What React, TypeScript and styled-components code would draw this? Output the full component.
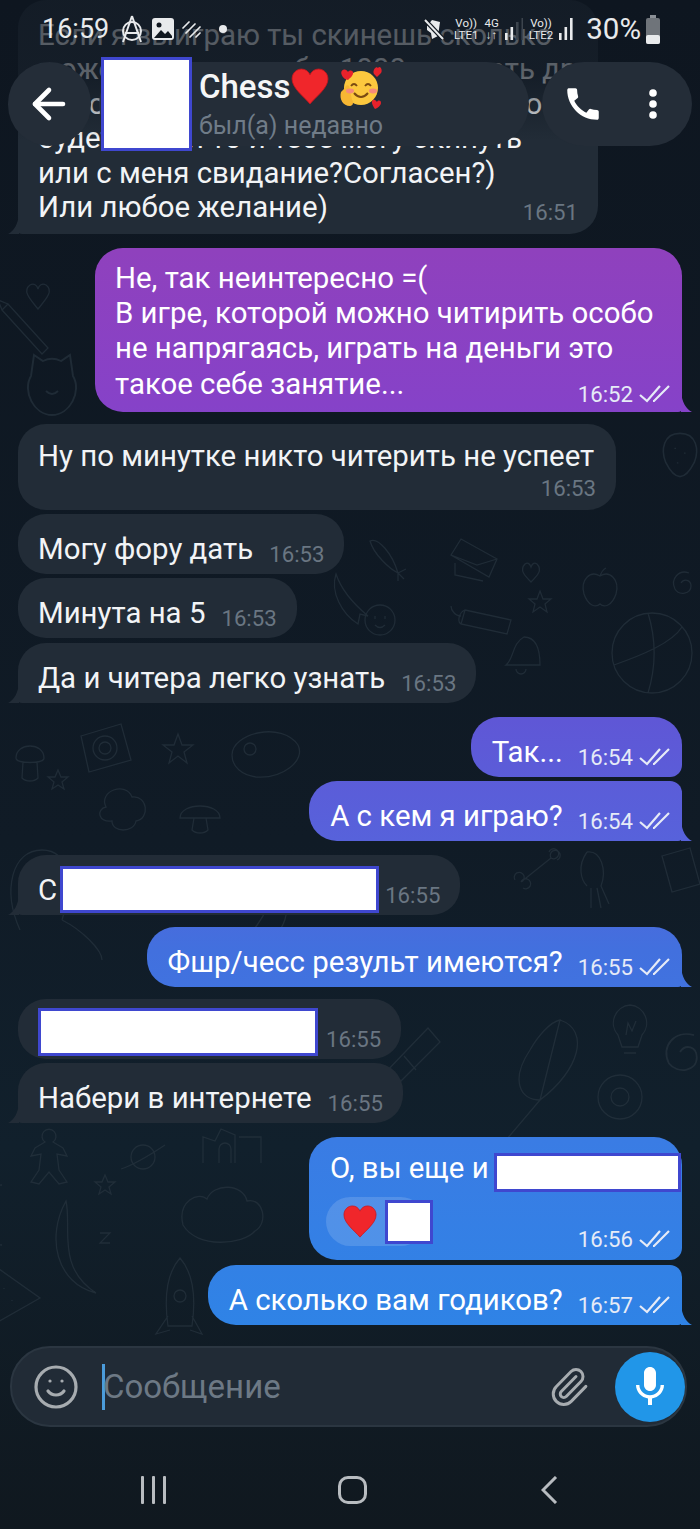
import React from 'react';
import styled, { createGlobalStyle, css } from 'styled-components';
import { ArrowLeft, Paperclip, Smile } from 'lucide-react';
import { MdCall, MdMic } from 'react-icons/md';

const GlobalStyle = createGlobalStyle`
  html, body { margin: 0; padding: 0; background: #10171f; }
  * { box-sizing: border-box; }
`;

const OUT_GRADIENT = `linear-gradient(180deg, #8f41bd 0, #8f41bd 250px, #8642c8 405px, #5f57d6 720px, #5762db 840px, #4270de 950px, #3a7ce4 1140px, #2f83e6 1325px)`;

const Screen = styled.div`
  position: relative;
  width: 700px;
  height: 1529px;
  overflow: hidden;
  display: flex;
  flex-direction: column;
  font-family: Roboto, 'Noto Sans', sans-serif;
  color: #f2f4f6;
  background: linear-gradient(180deg, #0e1620 0%, #101b26 55%, #11202c 75%, #10181f 100%);
`;

const Wallpaper = styled.svg`
  position: absolute;
  inset: 0;
  width: 700px;
  height: 1529px;
  fill: none;
  stroke: #2a3742;
  stroke-width: 1.3;
  opacity: 0.62;
`;

// darkens the messages that scroll under the status bar
const TopShade = styled.div`
  position: absolute;
  top: 0;
  left: 0;
  right: 0;
  height: 150px;
  z-index: 1;
  background: linear-gradient(180deg, rgba(14, 22, 32, 0.72) 0, rgba(14, 22, 32, 0.66) 75px, rgba(14, 22, 32, 0) 140px);
`;

/* status bar */
const StatusBar = styled.div`
  position: absolute;
  top: 13px;
  left: 42px;
  right: 40px;
  height: 32px;
  display: flex;
  align-items: center;
  z-index: 3;
`;

const Clock = styled.span`
  font-size: 27px;
  color: #e8eaec;
  margin-right: 11px;
`;

const StatusGroup = styled.div<{ $gap: number }>`
  display: flex;
  align-items: center;
  gap: ${p => p.$gap}px;
`;

const Spacer = styled.div`
  flex: 1;
`;

const NetLabel = styled.span`
  display: flex;
  flex-direction: column;
  align-items: center;
  font-size: 11.5px;
  line-height: 12px;
  color: #e8eaec;
`;

const Battery = styled.span`
  font-size: 29.5px;
  color: #e8eaec;
  margin-left: 9px;
  margin-right: 5px;
`;

/* header */
const Header = styled.div`
  position: absolute;
  top: 62px;
  left: 8px;
  right: 8px;
  height: 84px;
  display: flex;
  z-index: 2;
`;

const Pill = styled.div`
  height: 84px;
  border-radius: 42px;
  background: #242d38;
  display: flex;
  align-items: center;
`;

const BackCircle = styled(Pill)`
  width: 84px;
  justify-content: center;
  margin-right: 8px;
`;

const TitlePill = styled(Pill)`
  width: 435px;
  padding-left: 2px;
`;

const ActionsPill = styled(Pill)`
  width: 152px;
  margin-left: 13px;
  padding-left: 20px;
  gap: 43px;
`;

const Redact = styled.span<{ $w: number; $h: number }>`
  display: block;
  flex: none;
  width: ${p => p.$w}px;
  height: ${p => p.$h}px;
  background: #fff;
  border: 3px solid #3f47cf;
`;

const AvatarRedact = styled(Redact)`
  margin: -5px 7px -5px 0;
`;

const TitleBlock = styled.div`
  display: flex;
  flex-direction: column;
`;

const Title = styled.div`
  display: flex;
  align-items: center;
  font-size: 33px;
  font-weight: 500;
  line-height: 40px;
  margin-top: -2px;
  color: #f5f6f7;
`;

const Subtitle = styled.div`
  font-size: 25px;
  line-height: 32px;
  color: #707c88;
`;

/* messages */
const MessageList = styled.div`
  display: flex;
  flex-direction: column;
  position: relative;
  height: 1346px;
`;

const Bubble = styled.div<{ $out?: boolean; $tail?: boolean; $top: number; $joinTop?: boolean }>`
  position: relative;
  display: flex;
  align-items: flex-end;
  flex: none;
  font-size: 29.4px;
  line-height: 34px;
  margin-top: ${p => p.$top}px;
  padding: 18px 20px 8px;
  border-radius: 28px;
  ${p => p.$out
    ? css`
        align-self: flex-end;
        margin-right: 18px;
        padding-left: 21px;
        padding-right: 12px;
        background: ${OUT_GRADIENT};
        background-attachment: fixed;
        color: #fff;
        border-bottom-right-radius: ${p.$tail ? 4 : 12}px;
        border-top-right-radius: ${p.$joinTop ? 12 : 28}px;
      `
    : css`
        align-self: flex-start;
        margin-left: 18px;
        background: #222c37;
        border-bottom-left-radius: ${p.$tail ? 4 : 28}px;
      `}
  ${p => p.$tail && css`
    &::after {
      content: '';
      position: absolute;
      bottom: 0;
      width: 11px;
      height: 20px;
      background: inherit;
      background-attachment: inherit;
      ${p.$out
        ? css`
            right: -10px;
            clip-path: path('M0 0 C1 10 5 17 11 20 L0 20 Z');
          `
        : css`
            left: -10px;
            clip-path: path('M11 0 C10 10 6 17 0 20 L11 20 Z');
          `}
    }
  `}
`;

const StackBubble = styled(Bubble)<{ $width?: number }>`
  flex-direction: column;
  align-items: flex-start;
  width: ${p => (p.$width ? `${p.$width}px` : 'auto')};
`;

const FirstBubble = styled(StackBubble)`
  padding-top: 18px;
  padding-bottom: 9.6px;
  line-height: 34.4px;
`;

const PurpleBubble = styled(StackBubble)`
  padding-top: 13px;
  padding-left: 20px;
  padding-bottom: 6.2px;
  line-height: 35.2px;
`;

const PlainBubble = styled(StackBubble)`
  padding-top: 15px;
  padding-bottom: 10px;
`;

const MixedBubble = styled(StackBubble)`
  padding: 14px 2px 14px 21px;
`;

const Line = styled.div`
  white-space: nowrap;
`;

const Meta = styled.div<{ $out?: boolean; $overlap?: number; $stacked?: boolean; $gap?: number }>`
  display: flex;
  align-items: center;
  flex: none;
  gap: 6px;
  height: 24px;
  font-size: 22.2px;
  line-height: 24px;
  margin-left: ${p => p.$gap ?? (p.$out ? 15 : 16)}px;
  color: ${p => (p.$out ? '#e6ebf7' : '#6a7682')};
  ${p => p.$stacked && css`
    margin-left: auto;
    margin-top: ${p.$overlap ?? 0}px;
  `}
`;

const ReactionMeta = styled(Meta)`
  margin-bottom: -5px;
`;

const InlineRedact = styled(Redact)<{ $up: number; $down: number; $left: number }>`
  margin: ${p => -p.$up}px 0 ${p => -p.$down}px ${p => p.$left}px;
`;

const TextRow = styled.div`
  display: flex;
  align-items: flex-start;
  white-space: nowrap;
`;

const ReactionRow = styled.div`
  display: flex;
  align-items: flex-end;
  width: 100%;
  padding-right: 10px;
  margin-top: 5px;
`;

const Reaction = styled.div`
  display: flex;
  align-items: center;
  width: 99px;
  height: 49px;
  margin-left: -4px;
  padding-left: 17px;
  border-radius: 25px;
  background: rgba(255, 255, 255, 0.14);
`;

const ReactionRedact = styled(Redact)`
  margin-left: 8px;
  margin-top: 1px;
`;

/* composer */
const Composer = styled.div`
  width: 677px;
  height: 81px;
  margin: 0 0 0 10px;
  display: flex;
  align-items: center;
  padding: 0 0 0 20px;
  border-radius: 40px;
  background: #212b36;
  border: 2px solid #2b3641;
  color: #a7acb0;
`;

const Caret = styled.div`
  width: 3px;
  height: 46px;
  margin-left: 22px;
  background: #4b9cdb;
`;

const Placeholder = styled.div`
  flex: 1;
  font-size: 33px;
  color: #6d7985;
  margin-left: -2px;
`;

const ClipButton = styled.div`
  display: flex;
  margin-right: 25px;
`;

const MicButton = styled.div`
  width: 70px;
  height: 70px;
  border-radius: 50%;
  background: #2196e8;
  color: #fff;
  display: flex;
  align-items: center;
  justify-content: center;
`;

/* android nav */
const NavBar = styled.div`
  flex: 1;
  display: flex;
  align-items: flex-start;
  justify-content: space-between;
  padding: 49px 142px 0 141px;
`;

const RecentBars = styled.div`
  display: flex;
  gap: 8px;
  height: 28px;
  & > span {
    width: 3px;
    height: 100%;
    background: #b8bcc0;
    border-radius: 1px;
  }
`;

const HomeSquare = styled.div`
  width: 29px;
  height: 28px;
  border: 3px solid #b8bcc0;
  border-radius: 10px;
  margin-left: -2px;
`;

const BackChevron = styled.svg`
  width: 17px;
  height: 28px;
`;

const Checks = () => (
  <svg width="31" height="18" viewBox="0 0 31 18" fill="none" stroke="currentColor" strokeWidth="2.2">
    <path d="M1 10 L8 16 L21 1" />
    <path d="M14 16 L15 16 L30 1" />
  </svg>
);

const HeartEmoji = ({ size }: { size: number }) => (
  <svg width={size} height={size} viewBox="0 0 36 36" style={{ flex: 'none' }}>
    <path d="M18 34 C12 27 1 19 1 10.5 C1 4.5 5.5 1 10 1 C13.5 1 16.5 3 18 6.5 C19.5 3 22.5 1 26 1 C30.5 1 35 4.5 35 10.5 C35 19 24 27 18 34 Z" fill="#f0262b" stroke="#c9151c" strokeWidth="0.8" />
  </svg>
);

const FaceEmoji = () => (
  <svg width="44" height="46" viewBox="0 0 44 46" style={{ flex: 'none', marginLeft: 9 }}>
    <circle cx="23" cy="24" r="17" fill="#fcc83e" />
    <path d="M3 28 C1 35 5 42 12 42 C15 42 16 38 14 36 L11 22 C9 20 7 22 7 24 Z" fill="#f7b733" />
    <path d="M13 22 q3 -4 6 0 M27 22 q3 -4 6 0" stroke="#7a4a12" strokeWidth="1.8" fill="none" />
    <path d="M16 29 q7 8 14 0" stroke="#7a4a12" strokeWidth="2" fill="none" />
    <ellipse cx="12" cy="27" rx="4" ry="2.4" fill="#f58a7a" />
    <ellipse cx="35" cy="27" rx="4" ry="2.4" fill="#f58a7a" />
    <path d="M36 10 C34 7 38 1 40 4 C42 1 45 6 43 9 L39 13 Z" fill="#e8222b" />
    <path d="M7 15 C3 12 2 7 5 6 C7 5 9 6 10 8 C11 6 14 6 15 8 C16 11 12 14 10 16 Z" fill="#e8222b" />
    <path d="M37 45 C34 41 33 37 35 36 C37 35 38 37 39 38 C40 36 43 36 43 39 C43 41 40 44 37 45 Z" fill="#e8222b" />
  </svg>
);

// doodles behind the chat, x/y taken from the reference wallpaper
const doodles: { d: string; x: number; y: number; s?: number }[] = [
  { d: 'M0 16 C-8 6 -16 -2 -8 -8 C-4 -10 -1 -8 0 -4 C1 -8 4 -10 8 -8 C16 -2 8 6 0 16Z', x: 38, y: 293 },
  { d: 'M-12 -18 L-6 -14 C-2 -16 2 -16 6 -14 L12 -18 L14 -4 C20 6 12 22 0 22 C-12 22 -20 6 -14 -4Z M-4 6 q4 4 8 0', x: 52, y: 382, s: 1.5 },
  { d: 'M-22 -22 L18 22 L24 16 L-16 -28Z M-22 -22 L-26 -32 L-16 -28', x: 24, y: 332 },
  { d: 'M0 -18 C14 -18 16 -4 12 6 C8 14 4 18 0 18 C-4 18 -8 14 -12 6 C-16 -4 -14 -18 0 -18Z M-4 -6 v1 M4 -2 v1 M-2 6 v1', x: 680, y: 455, s: 1.2 },
  // carrot, flame, smiley, envelope, heart, apple, star, dynamite, bell, ball, swirl
  { d: 'M-14 -26 C-6 -30 8 -14 14 6 C6 2 -10 -12 -14 -26Z M14 6 l8 -4 M14 6 l6 6 M14 6 l0 8', x: 384, y: 567 },
  { d: 'M-14 -26 C-8 -8 6 6 18 16 L10 14 L8 24 C-8 14 -20 -8 -14 -26Z', x: 350, y: 600 },
  { d: 'M-15 0 a15 15 0 1 0 30 0 a15 15 0 1 0 -30 0 M-5 -4 v3 M5 -4 v3 M-5 5 q5 5 10 0', x: 380, y: 620 },
  { d: 'M-18 -8 L-8 -24 L28 -4 L20 14 Z M-18 -8 L8 2 L28 -4 M-14 0 L-14 12 L14 18', x: 469, y: 563 },
  { d: 'M0 12 C-6 6 -12 0 -6 -6 C-3 -8 -1 -6 0 -3 C1 -6 3 -8 6 -6 C12 0 6 6 0 12Z', x: 531, y: 570 },
  { d: 'M0 -14 C10 -20 20 -10 16 4 C12 16 4 18 0 14 C-4 18 -12 16 -16 4 C-20 -10 -10 -20 0 -14Z M0 -14 q2 -6 6 -8', x: 600, y: 590 },
  { d: 'M0 -11 L3 -3 L11 -3 L5 2 L7 10 L0 5 L-7 10 L-5 2 L-11 -3 L-3 -3Z', x: 540, y: 602 },
  { d: 'M-22 -10 L24 0 L20 14 L-26 4Z M-22 -10 C-28 -8 -30 2 -26 4 M-26 -4 C-32 -4 -36 -10 -36 -14', x: 487, y: 620 },
  { d: 'M-16 12 C-8 6 -10 -10 2 -16 C14 -16 18 -4 18 12Z M-6 16 a5 5 0 1 0 10 0', x: 522, y: 653 },
  { d: 'M-40 0 A40 40 0 1 1 40 0 A40 40 0 1 1 -40 0 M-38 12 C-10 2 20 -10 30 -26 M-4 -40 C4 -14 4 14 -4 40', x: 652, y: 653 },
  { d: 'M0 0 c3 -5 10 -3 10 3 c0 8 -12 10 -16 3 c-5 -10 4 -20 14 -16', x: 681, y: 583 },
  { d: 'M-22 -14 L18 -26 L28 10 L-14 22Z M2 -2 m-12 0 a12 12 0 1 0 24 0 a12 12 0 1 0 -24 0 M2 -2 m-6 0 a6 6 0 1 0 12 0 a6 6 0 1 0 -12 0', x: 103, y: 750 },
  { d: 'M0 -15 L4 -4 L15 -4 L6 3 L9 14 L0 7 L-9 14 L-6 3 L-15 -4 L-4 -4Z', x: 178, y: 749 },
  { d: 'M0 -10 L3 -3 L10 -3 L4 2 L6 9 L0 5 L-6 9 L-4 2 L-10 -3 L-3 -3Z', x: 58, y: 780 },
  { d: 'M-14 -10 C-14 -26 14 -26 14 -10 C14 -4 -14 -4 -14 -10Z M-7 -6 L-8 10 C-4 14 4 14 8 10 L7 -6', x: 30, y: 768 },
  { d: 'M-30 0 C-30 -22 20 -34 36 -10 C44 6 20 24 -6 22 C-20 20 -30 12 -30 0Z M-18 -6 a6 6 0 1 0 12 0 a6 6 0 1 0 -12 0', x: 262, y: 755 },
  { d: 'M-16 -8 C-24 -24 4 -34 10 -18 C26 -20 28 4 14 6 C12 18 -10 18 -10 6 C-24 8 -26 -6 -16 -8Z', x: 122, y: 815 },
  { d: 'M-20 0 C-20 -16 20 -16 20 0Z M-6 0 L-8 12 C-4 16 4 16 8 12 L6 0', x: 200, y: 818 },
  { d: 'M-22 50 C-40 10 -30 -30 0 -30 C30 -30 30 10 20 40 M20 40 C40 50 60 70 60 80', x: 42, y: 880 },
  { d: 'M-16 12 L14 -12 M-16 12 a5 5 0 1 0 -6 -2 M-16 12 a5 5 0 1 1 2 6 M14 -12 a5 5 0 1 1 6 2 M14 -12 a5 5 0 1 0 -2 -6', x: 537, y: 870 },
  { d: 'M-8 -28 C6 -30 12 -10 6 6 L14 24 M2 8 L6 28 M-4 8 L-4 28 M-8 -28 C-18 -14 -14 0 -8 6', x: 595, y: 880 },
  { d: 'M-14 -14 L14 -22 L24 14 L-4 22Z M-14 -14 L-4 22', x: 676, y: 870 },
  { d: 'M-34 30 C-10 20 10 -6 10 -30 C30 -30 30 -6 20 10 C10 24 -20 40 -34 30Z', x: 260, y: 920 },
  { d: 'M0 -22 a18 18 0 0 1 12 30 L8 20 H-8 L-12 8 A18 18 0 0 1 0 -22Z M-6 26 H6 M-4 8 L-2 -4 L2 4 L6 -6', x: 630, y: 1027 },
  { d: 'M40 -50 C70 -40 60 0 20 30 L-14 70 M20 30 C0 30 -10 10 10 -20 C18 -34 30 -48 40 -50Z', x: 520, y: 1070 },
  { d: 'M-22 0 a22 22 0 1 0 44 0 a22 22 0 1 0 -44 0 M-9 0 a9 9 0 1 0 18 0 a9 9 0 1 0 -18 0', x: 620, y: 1097 },
  { d: 'M0 0 c4 -6 12 -4 12 4 c0 10 -14 12 -20 4 c-6 -12 4 -24 18 -20', x: 680, y: 1052, s: 1.4 },
  { d: 'M-26 22 L18 -24 L30 -10 L-14 34Z M-6 4 L6 18', x: 410, y: 1052 },
  { d: 'M-4 -18 a7 7 0 1 1 8 0 L14 -12 L18 -4 L8 -6 L10 10 L18 22 L10 24 L0 12 L-10 24 L-18 22 L-10 10 L-8 -6 L-18 -4 L-14 -12Z', x: 49, y: 1160 },
  { d: 'M-12 0 a12 12 0 1 0 24 0 a12 12 0 1 0 -24 0 M-22 12 C-10 8 10 -4 22 -12', x: 143, y: 1157 },
  { d: 'M0 -10 L3 -3 L10 -3 L4 2 L6 9 L0 5 L-6 9 L-4 2 L-10 -3 L-3 -3Z', x: 105, y: 1185 },
  { d: 'M-40 20 C-46 -4 -24 -14 -16 -6 C-10 -22 20 -22 24 -4 C40 -8 46 18 32 26 C20 40 -26 44 -40 20Z', x: 223, y: 1205 },
  { d: 'M-22 -12 V-38 L-10 -34 L-4 -46 L10 -40 V-12 M14 -38 H36 V-12 M-6 -12 V-26 a6 6 0 1 1 12 0 V-12', x: 225, y: 1175 },
  { d: 'M-24 -30 A28 28 0 1 0 -24 30 A28 28 0 0 1 -24 -30Z', x: 26, y: 1215 },
  { d: 'M-10 -46 C-30 -10 -20 36 20 46 C-20 20 -4 -20 -10 -46Z M24 -14 L34 -14 L24 -4 L34 -4', x: 76, y: 1247 },
  { d: 'M-20 -24 L28 10 L-14 34Z M-8 0 v1 M0 12 v1', x: 12, y: 1288 },
  { d: 'M0 -42 C14 -26 16 -2 12 26 H-12 C-16 -2 -14 -26 0 -42Z M-6 -4 a6 6 0 1 0 12 0 a6 6 0 1 0 -12 0 M-12 16 L-24 34 L-10 30 M12 16 L22 34 L10 30', x: 180, y: 1300 },
];

const Stripes = () => (
  <svg width="20" height="20" viewBox="0 0 20 20" stroke="#e8eaec" strokeWidth="1.7" strokeLinecap="round">
    <path d="M1 9 L7 3 M4 14 L13 5 M8 18 L18 8 M14 18 L18 14" />
  </svg>
);

const AnarchyIcon = () => (
  <svg width="24" height="28" viewBox="0 0 24 28" fill="none" stroke="#e8eaec" strokeWidth="2">
    <circle cx="12" cy="16" r="9" />
    <path d="M12 1 L3 27 M12 1 L21 27 M5 18 H19" />
  </svg>
);

const ImageIcon = () => (
  <svg width="22" height="22" viewBox="0 0 22 22">
    <rect width="22" height="22" rx="3" fill="#e8eaec" />
    <circle cx="7" cy="7" r="2.5" fill="#10171f" />
    <path d="M2 20 L9 12 L13 16 L16 13 L20 18 V20Z" fill="#10171f" />
  </svg>
);

const MuteIcon = () => (
  <svg width="24" height="24" viewBox="0 0 24 24">
    <path d="M8 3 L16 5 L14 19 L8 22 L7 16 L3 13 L3 9 Z" fill="#e8eaec" />
    <path d="M1 3 L19 22" stroke="#10171f" strokeWidth="4.5" />
    <path d="M1 3 L19 22" stroke="#e8eaec" strokeWidth="2" />
  </svg>
);

const SignalBars = ({ levels, active }: { levels: number[]; active: number }) => (
  <svg width="18" height="22" viewBox="0 0 18 22">
    {levels.map((h, i) => (
      <rect key={i} x={i * 5.5} y={22 - h} width="2.6" height={h} fill={i < active ? '#e8eaec' : '#3c444d'} />
    ))}
  </svg>
);

const BatteryIcon = () => (
  <svg width="14" height="29" viewBox="0 0 14 29">
    <rect x="4" y="0" width="6" height="3" fill="#8b9096" />
    <rect x="0" y="3" width="14" height="26" rx="2" fill="#6f747a" />
    <rect x="0" y="20" width="14" height="9" rx="2" fill="#e8eaec" />
  </svg>
);

const MoreIcon = () => (
  <svg width="12" height="34" viewBox="0 0 12 34" fill="#fff">
    <circle cx="6" cy="6" r="3.8" />
    <circle cx="6" cy="17" r="3.8" />
    <circle cx="6" cy="28" r="3.8" />
  </svg>
);

export default function App() {
  return (
    <Screen>
      <GlobalStyle />
      <Wallpaper viewBox="0 0 700 1529">
        {doodles.map((o, i) => (
          <path key={i} d={o.d} transform={`translate(${o.x} ${o.y}) scale(${o.s ?? 1})`} />
        ))}
      </Wallpaper>

      <TopShade />

      <StatusBar>
        <Clock>16:59</Clock>
        <StatusGroup $gap={8}>
          <AnarchyIcon />
          <ImageIcon />
          <Stripes />
        </StatusGroup>
        <svg width="8" height="8" style={{ marginLeft: 17 }}>
          <circle cx="4" cy="4" r="4" fill="#e8eaec" />
        </svg>
        <Spacer />
        <StatusGroup $gap={6}>
          <MuteIcon />
          <NetLabel>Vo))<span>LTE1</span></NetLabel>
          <NetLabel>4G<span>↓↑</span></NetLabel>
          <SignalBars levels={[7, 13, 18, 22]} active={2} />
          <NetLabel>Vo))<span>LTE2</span></NetLabel>
          <SignalBars levels={[7, 13, 22]} active={3} />
        </StatusGroup>
        <Battery>30%</Battery>
        <BatteryIcon />
      </StatusBar>

      <Header>
        <BackCircle>
          <ArrowLeft size={48} color="#fff" strokeWidth={2.3} />
        </BackCircle>
        <TitlePill>
          <AvatarRedact $w={91} $h={94} />
          <TitleBlock>
            <Title>
              Chess
              <HeartEmoji size={38} />
              <FaceEmoji />
            </Title>
            <Subtitle>был(а) недавно</Subtitle>
          </TitleBlock>
        </TitlePill>
        <ActionsPill>
          <MdCall size={42} color="#fff" />
          <MoreIcon />
        </ActionsPill>
      </Header>

      <MessageList>
        <FirstBubble $top={0} $tail $width={580}>
          <Line>Если я выиграю ты скинешь сколько</Line>
          <Line>можешь, или хотя бы 1000 или дать др</Line>
          <Line>подойдёт любая сумма, а если мало</Line>
          <Line>будет ничья то и тебе могу скинуть</Line>
          <Line>или с меня свидание?Согласен?)</Line>
          <Line>Или любое желание)</Line>
          <Meta $stacked $overlap={-24}>16:51</Meta>
        </FirstBubble>

        <PurpleBubble $out $tail $top={14} $width={587}>
          <Line>Не, так неинтересно =(</Line>
          <Line>В игре, которой можно читирить особо</Line>
          <Line>не напрягаясь, играть на деньги это</Line>
          <Line>такое себе занятие...</Line>
          <Meta $out $stacked $overlap={-20}>16:52 <Checks /></Meta>
        </PurpleBubble>

        <PlainBubble $top={12} $width={598}>
          <Line>Ну по минутке никто читерить не успеет</Line>
          <Meta $stacked $overlap={3}>16:53</Meta>
        </PlainBubble>
        <Bubble $top={4}>Могу фору дать<Meta>16:53</Meta></Bubble>
        <Bubble $top={4}>Минута на 5<Meta>16:53</Meta></Bubble>
        <Bubble $top={5} $tail>Да и читера легко узнать<Meta>16:53</Meta></Bubble>

        <Bubble $out $top={14}>Так...<Meta $out>16:54 <Checks /></Meta></Bubble>
        <Bubble $out $tail $joinTop $top={4}>А с кем я играю?<Meta $out>16:54 <Checks /></Meta></Bubble>

        <Bubble $top={14} $tail>
          С
          <InlineRedact $w={319} $h={47} $up={7} $down={6} $left={3} />
          <Meta $gap={6}>16:55</Meta>
        </Bubble>

        <Bubble $out $tail $top={12}>Фшр/чесс результ имеются?<Meta $out>16:55 <Checks /></Meta></Bubble>

        <Bubble $top={12}>
          <InlineRedact $w={280} $h={48} $up={9} $down={5} $left={0} />
          <Meta $gap={8}>16:55</Meta>
        </Bubble>
        <Bubble $top={4} $tail>Набери в интернете<Meta>16:55</Meta></Bubble>

        <MixedBubble $out $top={14} $width={373}>
          <TextRow>
            О, вы еще и
            <InlineRedact $w={187} $h={39} $up={-2} $down={0} $left={5} />
          </TextRow>
          <ReactionRow>
            <Reaction>
              <HeartEmoji size={34} />
              <ReactionRedact $w={48} $h={44} />
            </Reaction>
            <ReactionMeta $out $stacked>16:56 <Checks /></ReactionMeta>
          </ReactionRow>
        </MixedBubble>
        <Bubble $out $tail $joinTop $top={5}>А сколько вам годиков?<Meta $out>16:57 <Checks /></Meta></Bubble>
      </MessageList>

      <Composer>
        <Smile size={48} strokeWidth={1.6} />
        <Caret />
        <Placeholder>Сообщение</Placeholder>
        <ClipButton>
          <Paperclip size={42} strokeWidth={1.7} />
        </ClipButton>
        <MicButton>
          <MdMic size={48} />
        </MicButton>
      </Composer>

      <NavBar>
        <RecentBars><span /><span /><span /></RecentBars>
        <HomeSquare />
        <BackChevron viewBox="0 0 17 28" fill="none" stroke="#b8bcc0" strokeWidth="3">
          <path d="M15 1 L2 14 L15 27" />
        </BackChevron>
      </NavBar>
    </Screen>
  );
}
